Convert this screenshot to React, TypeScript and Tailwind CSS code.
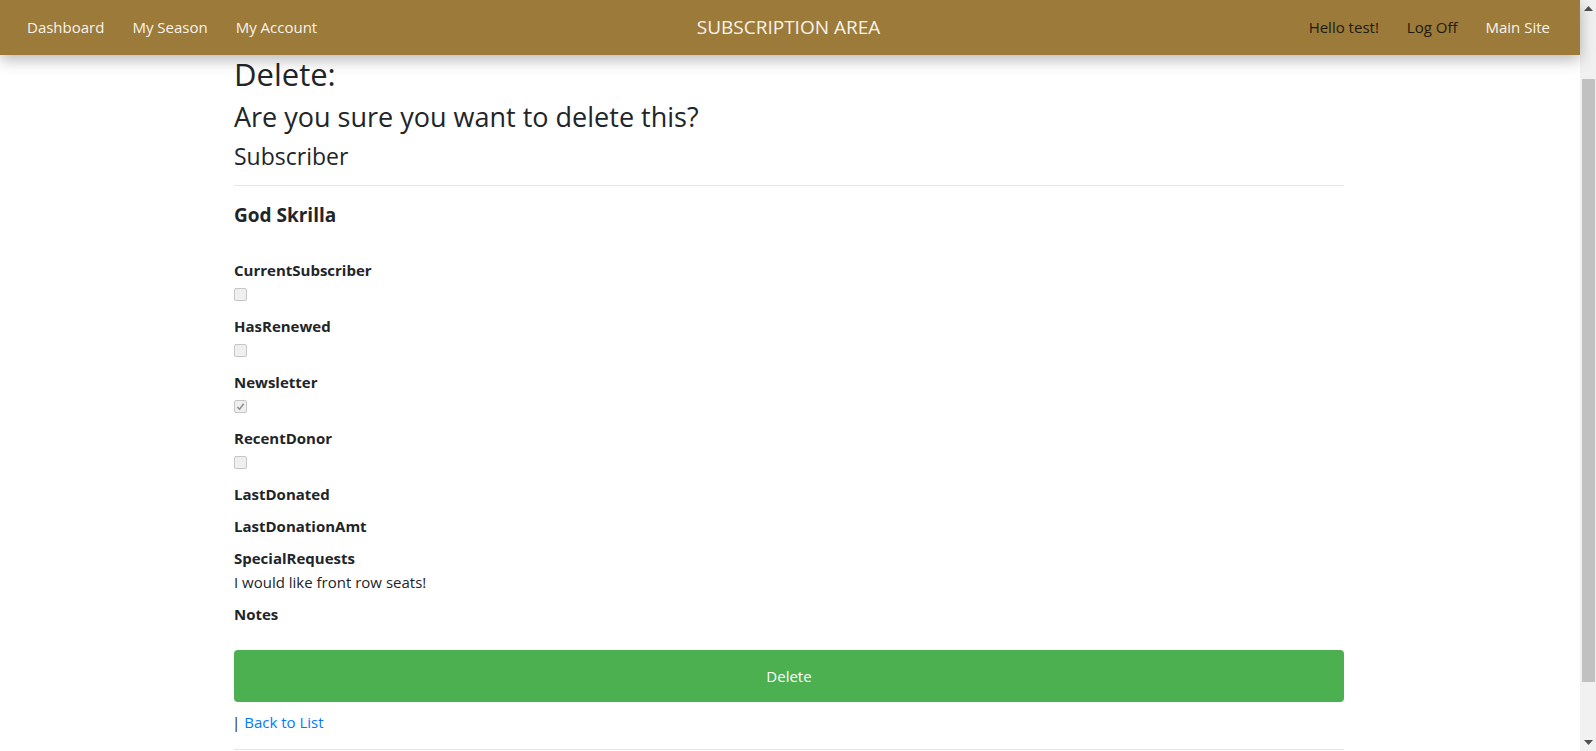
import React from "react";

const font = { fontFamily: '"Open Sans", "Noto Sans", sans-serif' };

function Box({ checked }: { checked?: boolean }) {
  return (
    <span className="flex h-[13px] w-[13px] items-center justify-center rounded-[2px] border border-[#c6c6c6] bg-[#efefef]">
      {checked && (
        <svg width="9" height="9" viewBox="0 0 10 10">
          <path d="M1.5 5.5 L4 8 L8.5 2" fill="none" stroke="#8a8a8a" strokeWidth="1.6" />
        </svg>
      )}
    </span>
  );
}

function Field({ label, children }: { label: string; children?: React.ReactNode }) {
  return (
    <div className="mb-[8px]">
      <div className="h-[24px] text-[15px] font-bold leading-[24px]">{label}</div>
      {children}
    </div>
  );
}

export default function App() {
  return (
    <div className="flex h-[751px] w-full overflow-hidden bg-white text-[#212529]" style={font}>
      <div className="flex min-w-0 flex-1 flex-col">
        <nav className="relative z-10 flex h-[55px] shrink-0 items-center bg-[#9c7a3a] px-[27px] shadow-[0_5px_14px_rgba(0,0,0,0.28)] text-[15px]">
          <div className="flex flex-1 items-center gap-[28px] text-[#f7f3ea]">
            <span>Dashboard</span>
            <span>My Season</span>
            <span>My Account</span>
          </div>
          <div className="text-[19px] text-[#f7f3ea]">SUBSCRIPTION AREA</div>
          <div className="flex flex-1 items-center justify-end gap-[28px] pr-[3px]">
            <span className="text-[#1f1a10]">Hello test!</span>
            <span className="text-[#1f1a10]">Log Off</span>
            <span className="text-[#f7f3ea]">Main Site</span>
          </div>
        </nav>
        <main className="mx-auto w-[1110px] -translate-x-[1px]">
          <h2 className="h-[38px] text-[31px] font-medium leading-[38px]">Delete:</h2>
          <h3 className="mt-[9px] h-[29px] text-[27px] font-medium leading-[29px]">Are you sure you want to delete this?</h3>
          <h4 className="mt-[11px] h-[29px] text-[23px] font-medium leading-[29px]">Subscriber</h4>
          <hr className="mt-[14px] border-t border-[#e5e5e5]" />
          <div className="mt-[17px] h-[24px] text-[19px] font-bold leading-[24px]">God Skrilla</div>
          <div className="mt-[31px]">
            <Field label="CurrentSubscriber">
              <div className="flex h-[24px] items-center"><Box /></div>
            </Field>
            <Field label="HasRenewed">
              <div className="flex h-[24px] items-center"><Box /></div>
            </Field>
            <Field label="Newsletter">
              <div className="flex h-[24px] items-center"><Box checked /></div>
            </Field>
            <Field label="RecentDonor">
              <div className="flex h-[24px] items-center"><Box /></div>
            </Field>
            <Field label="LastDonated" />
            <Field label="LastDonationAmt" />
            <Field label="SpecialRequests">
              <div className="h-[24px] text-[15px] leading-[24px]">I would like front row seats!</div>
            </Field>
            <Field label="Notes" />
          </div>
          <button className="mt-[24px] flex h-[52px] w-full items-center justify-center rounded-[4px] bg-[#4caf50] text-[15px] text-white">
            Delete
          </button>
          <div className="mt-[8px] flex h-[24px] items-center text-[15px] leading-[24px]">
            <span className="-ml-[2px]">|</span>
            <span className="ml-[4px] text-[#007bff]">Back to List</span>
          </div>
          <hr className="mt-[15px] border-t border-[#e5e5e5]" />
        </main>
      </div>
      <div className="flex h-full w-[16px] shrink-0 flex-col bg-[#f1f1f1]">
        <div className="flex h-[17px] items-center justify-center">
          <svg width="9" height="5" viewBox="0 0 9 5"><path d="M0 5 L4.5 0 L9 5 Z" fill="#505050" /></svg>
        </div>
        <div className="mt-[62px] h-[603px] pl-[2px] pr-[1px]">
          <div className="h-full w-full bg-[#c1c1c1]" />
        </div>
        <div className="flex-1" />
        <div className="flex h-[17px] items-center justify-center">
          <svg width="9" height="5" viewBox="0 0 9 5"><path d="M0 0 L4.5 5 L9 0 Z" fill="#505050" /></svg>
        </div>
      </div>
    </div>
  );
}
